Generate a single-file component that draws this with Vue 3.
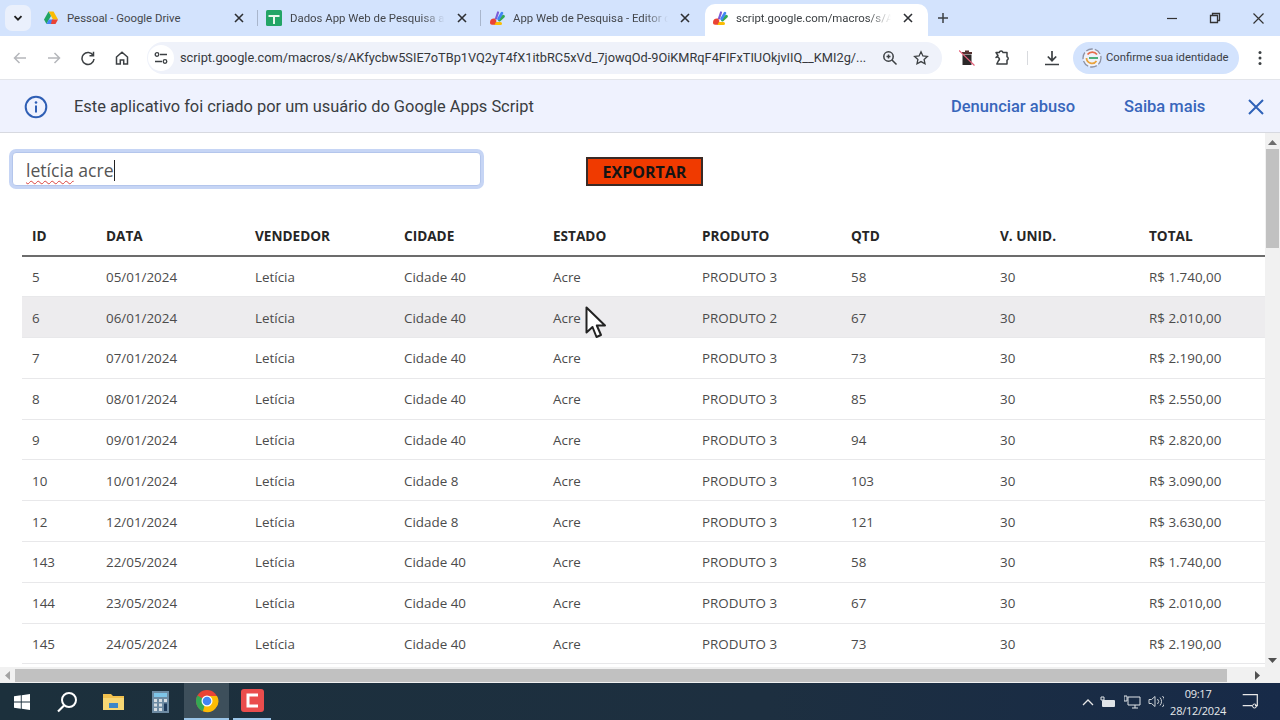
<script setup>
const tabs = [
  { icon: 'drive', title: 'Pessoal - Google Drive' },
  { icon: 'sheets', title: 'Dados App Web de Pesquisa ac' },
  { icon: 'script', title: 'App Web de Pesquisa - Editor d' },
  { icon: 'script', title: 'script.google.com/macros/s/AK', active: true }
]
const heads = ['ID', 'DATA', 'VENDEDOR', 'CIDADE', 'ESTADO', 'PRODUTO', 'QTD', 'V. UNID.', 'TOTAL']
const rows = [
  ['5', '05/01/2024', 'Cidade 40', 'PRODUTO 3', '58', 'R$ 1.740,00'],
  ['6', '06/01/2024', 'Cidade 40', 'PRODUTO 2', '67', 'R$ 2.010,00', true],
  ['7', '07/01/2024', 'Cidade 40', 'PRODUTO 3', '73', 'R$ 2.190,00'],
  ['8', '08/01/2024', 'Cidade 40', 'PRODUTO 3', '85', 'R$ 2.550,00'],
  ['9', '09/01/2024', 'Cidade 40', 'PRODUTO 3', '94', 'R$ 2.820,00'],
  ['10', '10/01/2024', 'Cidade 8', 'PRODUTO 3', '103', 'R$ 3.090,00'],
  ['12', '12/01/2024', 'Cidade 8', 'PRODUTO 3', '121', 'R$ 3.630,00'],
  ['143', '22/05/2024', 'Cidade 40', 'PRODUTO 3', '58', 'R$ 1.740,00'],
  ['144', '23/05/2024', 'Cidade 40', 'PRODUTO 3', '67', 'R$ 2.010,00'],
  ['145', '24/05/2024', 'Cidade 40', 'PRODUTO 3', '73', 'R$ 2.190,00']
]
</script>

<template>
  <div class="screen">
    <header class="tabstrip">
      <button class="collapse" aria-label="Lista de guias">
        <svg width="12" height="12" viewBox="0 0 12 12"><path d="M2.500 4.200 6 7.700l3.500-3.500" fill="none" stroke="#1f1f1f" stroke-width="1.800"/></svg>
      </button>
      <div class="tabs">
        <div v-for="(t, i) in tabs" :key="i" class="tab" :class="{ active: t.active, sep: i === 0 || i === 1 }">
          <svg v-if="t.icon === 'drive'" class="fav" viewBox="0 0 16 16">
            <path d="M5.500 1.500h5L15 9.500h-5z" fill="#fbbc04"/>
            <path d="M5.500 1.500 1 9.500l2.500 4.500L8 6z" fill="#1fa463"/>
            <path d="M5.800 9.500H10.500L9 14H3.500z" fill="#4285f4"/>
            <path d="M9 9.500h6L12.500 14H8z" fill="#ea4335"/>
          </svg>
          <svg v-else-if="t.icon === 'sheets'" class="fav" viewBox="0 0 16 16">
            <rect width="16" height="16" rx="1.500" fill="#23a566"/>
            <path d="M2.500 5h11v2H9v7H7V7H2.500z" fill="#e9f7ec"/>
          </svg>
          <svg v-else class="fav" viewBox="0 0 16 16">
            <path d="M10.500 10l3.800-3.600" stroke="#34a853" stroke-width="3" stroke-linecap="round" fill="none"/>
            <path d="M9.500 9l3.500-6" stroke="#4285f4" stroke-width="2.600" stroke-linecap="round" fill="none"/>
            <path d="M7 8.500l2-6" stroke="#7c5cd6" stroke-width="2.200" stroke-linecap="round" fill="none"/>
            <path d="M6 13.500h5.500" stroke="#fbbc04" stroke-width="3" stroke-linecap="round" fill="none"/>
            <path d="M1 12.500C1 9.500 3 8 6 8.500L7.500 11 5.500 14.800H3C1.800 14.800 1 13.800 1 12.500z" fill="#ea4335"/>
          </svg>
          <span class="tab-title">{{ t.title }}</span>
          <svg class="tab-x" width="10" height="10" viewBox="0 0 10 10"><path d="M1 1l8 8M9 1 1 9" stroke="#2d2f33" stroke-width="1.600"/></svg>
        </div>
        <svg class="plus" width="12" height="12" viewBox="0 0 12 12"><path d="M6 1v10M1 6h10" stroke="#3c4043" stroke-width="1.500"/></svg>
      </div>
      <div class="winctl">
        <svg width="12" height="12" viewBox="0 0 12 12"><path d="M1 6.500h10" stroke="#333" stroke-width="1.200"/></svg>
        <svg width="12" height="12" viewBox="0 0 12 12"><path d="M3.500 3V1.500h7v7H9M1.500 3.500h7v7h-7z" fill="none" stroke="#333" stroke-width="1.300"/></svg>
        <svg width="13" height="13" viewBox="0 0 13 13"><path d="M1.500 1.500l10 10M11.500 1.500l-10 10" stroke="#333" stroke-width="1.200"/></svg>
      </div>
    </header>

    <nav class="toolbar">
      <div class="navs">
        <svg width="16" height="16" viewBox="0 0 16 16"><path d="M14 8H3M7.500 3 2.500 8l5 5" fill="none" stroke="#b5b7bb" stroke-width="1.500"/></svg>
        <svg width="16" height="16" viewBox="0 0 16 16"><path d="M2 8h11M8.500 3l5 5-5 5" fill="none" stroke="#b5b7bb" stroke-width="1.500"/></svg>
        <svg width="16" height="16" viewBox="0 0 16 16"><path d="M13.200 5.500A6 6 0 1 0 14 9M13.500 1.800v4h-4" fill="none" stroke="#3c4043" stroke-width="1.500"/></svg>
        <svg width="16" height="16" viewBox="0 0 16 16"><path d="M2.500 7 8 2.200 13.500 7v7H9.700v-4H6.300v4H2.500z" fill="none" stroke="#3c4043" stroke-width="1.500"/></svg>
      </div>
      <div class="omnibox">
        <span class="site">
          <svg width="16" height="16" viewBox="0 0 16 16"><path d="M7 4.500H14M2 11.500h7" stroke="#3c4043" stroke-width="1.500" fill="none"/><circle cx="4" cy="4.500" r="1.800" fill="none" stroke="#3c4043" stroke-width="1.300"/><circle cx="12" cy="11.500" r="1.800" fill="none" stroke="#3c4043" stroke-width="1.300"/></svg>
        </span>
        <span class="url">script.google.com/macros/s/AKfycbw5SIE7oTBp1VQ2yT4fX1itbRC5xVd_7jowqOd-9OiKMRqF4FIFxTIUOkjvIIQ__KMI2g/...</span>
        <svg class="zoomi" width="16" height="16" viewBox="0 0 16 16"><circle cx="6.500" cy="6.500" r="4.700" fill="none" stroke="#3c4043" stroke-width="1.500"/><path d="M10 10l4.500 4.500M4.500 6.500h4M6.500 4.500v4" stroke="#3c4043" stroke-width="1.500"/></svg>
        <svg class="stari" width="16" height="16" viewBox="0 0 16 16"><path d="M8 1.800l1.900 4.100 4.500.5-3.300 3 .9 4.400L8 11.600l-4 2.200.9-4.400-3.300-3 4.500-.5z" fill="none" stroke="#3c4043" stroke-width="1.300"/></svg>
      </div>
      <div class="exts">
        <svg class="e-trash" width="16" height="18" viewBox="0 0 16 18"><path d="M3 3h10v2H3zM6 1.500h4V3H6z" fill="#55302f"/><path d="M3.500 5.500h9V16h-9z" fill="#2b2728"/><path d="M0 1.500l15.500 15" stroke="#e5607a" stroke-width="1.100"/></svg>
        <svg class="e-puzzle" width="18" height="18" viewBox="0 0 18 18"><path d="M3 3.500h3.200a2 2 0 0 1 3.800 0h4v4.200a1.800 1.800 0 0 1 0 3.400V15H3.800l1.700-3.300A2 2 0 0 0 3 8.500L5 6.500z" fill="none" stroke="#3c4043" stroke-width="1.500" stroke-linejoin="round"/></svg>
        <span class="divider"></span>
        <svg class="e-down" width="16" height="16" viewBox="0 0 16 16"><path d="M8 1v9.500M3.800 6.500 8 10.700l4.200-4.200M1 14.500h14" fill="none" stroke="#3c4043" stroke-width="1.700"/></svg>
        <div class="chip">
          <svg width="20" height="20" viewBox="0 0 20 20">
            <circle cx="10" cy="10" r="9" fill="#eef2fb" stroke="#8d93a6" stroke-width="1.300" stroke-dasharray="7 2"/>
            <path d="M15 6.500a6 6 0 0 0-9.500 0" fill="none" stroke="#e66c4a" stroke-width="1.800"/>
            <path d="M4.500 10a5.500 5.500 0 0 0 10 3" fill="none" stroke="#e8a33d" stroke-width="1.800"/>
            <path d="M7 10h9" stroke="#3aa76d" stroke-width="1.800"/>
          </svg>
          <span>Confirme sua identidade</span>
        </div>
        <svg class="e-menu" width="4" height="16" viewBox="0 0 4 16"><circle cx="2" cy="2.500" r="1.500" fill="#3c4043"/><circle cx="2" cy="8" r="1.500" fill="#3c4043"/><circle cx="2" cy="13.500" r="1.500" fill="#3c4043"/></svg>
      </div>
    </nav>

    <aside class="infobar">
      <svg class="info" width="24" height="24" viewBox="0 0 24 24"><circle cx="12" cy="12" r="10.300" fill="none" stroke="#2f5fb5" stroke-width="2"/><path d="M12 10.500v7" stroke="#2f5fb5" stroke-width="2"/><circle cx="12" cy="7.500" r="1.300" fill="#2f5fb5"/></svg>
      <span class="info-text">Este aplicativo foi criado por um usuário do Google Apps Script</span>
      <a class="lnk l1">Denunciar abuso</a>
      <a class="lnk l2">Saiba mais</a>
      <svg class="info-x" width="18" height="18" viewBox="0 0 18 18"><path d="M2 2l14 14M16 2 2 16" stroke="#2f62b8" stroke-width="2"/></svg>
    </aside>

    <main class="page">
      <div class="view">
        <div class="content">
          <div class="controls">
            <div class="search">
              <span class="typed"><span class="misspelt">letícia</span> acre</span><span class="caret"></span>
            </div>
            <button class="export">EXPORTAR</button>
          </div>
          <table class="grid">
            <colgroup>
              <col class="c-id" />
              <col v-for="n in 8" :key="n" class="c-n" />
            </colgroup>
            <thead>
              <tr><th v-for="h in heads" :key="h">{{ h }}</th></tr>
            </thead>
            <tbody>
              <tr v-for="r in rows" :key="r[0]" :class="{ hover: r[6] }">
                <td>{{ r[0] }}</td>
                <td>{{ r[1] }}</td>
                <td>Letícia</td>
                <td>{{ r[2] }}</td>
                <td>Acre</td>
                <td>{{ r[3] }}</td>
                <td>{{ r[4] }}</td>
                <td>30</td>
                <td>{{ r[5] }}</td>
              </tr>
            </tbody>
          </table>
          <svg class="cursor" width="22" height="33" viewBox="0 0 22 33"><path d="M1.500 1.500v25l6-5.500 4 10 4.500-2-4.200-9.500H20z" fill="#fff" stroke="#222" stroke-width="2" stroke-linejoin="round"/></svg>
        </div>
        <div class="vbar">
          <svg width="9" height="5" viewBox="0 0 9 5"><path d="M4.500 0 9 5H0z" fill="#6d6d6d"/></svg>
          <div class="vthumb"></div>
          <svg class="vdown" width="9" height="5" viewBox="0 0 9 5"><path d="M0 0h9L4.500 5z" fill="#505050"/></svg>
        </div>
      </div>
      <div class="hbar">
        <svg width="5" height="9" viewBox="0 0 5 9"><path d="M5 0v9L0 4.500z" fill="#a3a3a3"/></svg>
        <div class="hthumb"></div>
        <svg width="5" height="9" viewBox="0 0 5 9"><path d="M0 0v9l5-4.500z" fill="#505050"/></svg>
      </div>
    </main>

    <footer class="taskbar">
      <div class="task-left">
        <span class="tb t1"><svg width="16" height="16" viewBox="0 0 16 16"><path d="M0 2.300 6.800 1.300v6.300H0zM7.700 1.200 16 0v7.600H7.700zM0 8.400h6.800v6.300L0 13.700zM7.700 8.400H16V16l-8.300-1.200z" fill="#fff"/></svg></span>
        <span class="tb"><svg width="22" height="22" viewBox="0 0 22 22"><circle cx="13" cy="9" r="7" fill="none" stroke="#fff" stroke-width="2"/><path d="M8 14.500 2 20.500" stroke="#fff" stroke-width="2.200"/></svg></span>
        <span class="tb t3"><svg width="21" height="18" viewBox="0 0 21 18"><path d="M0 1h8l2 2h11v14H0z" fill="#f2c14e"/><path d="M0 5h21v12H0z" fill="#f7d774"/><rect x="6" y="10" width="9" height="5" fill="#3d87c9"/></svg></span>
        <span class="tb t3"><svg width="17" height="22" viewBox="0 0 17 22"><rect width="17" height="22" fill="#6d8ba3"/><rect x="2" y="2" width="13" height="4" fill="#7ec5e8"/><path d="M2 8h3v3H2zM7 8h3v3H7zM12 8h3v3h-3zM2 12.500h3v3H2zM7 12.500h3v3H7zM2 17h3v3H2zM7 17h3v3H7z" fill="#d5dde3"/><rect x="12" y="12.500" width="3" height="7.500" fill="#1f3b5c"/></svg></span>
        <span class="tb on"><svg width="24" height="24" viewBox="0 0 24 24">
          <circle cx="12" cy="12" r="11" fill="#ea4335"/>
          <path d="M12 12 2.500 6.500A11 11 0 0 0 8 22.300z" fill="#34a853"/>
          <path d="M12 7h10a11 11 0 0 1-14 15.300z" fill="#fbbc04"/>
          <circle cx="12" cy="12" r="5.500" fill="#fff"/><circle cx="12" cy="12" r="4.300" fill="#4285f4"/>
        </svg></span>
        <span class="tb und"><svg width="23" height="23" viewBox="0 0 23 23"><rect width="23" height="23" rx="3" fill="#ea4d4d"/><path d="M17 6H7v11h10" fill="none" stroke="#fff" stroke-width="3"/></svg></span>
      </div>
      <div class="tray">
        <svg class="chev" width="12" height="8" viewBox="0 0 12 8"><path d="M1 7l5-5 5 5" fill="none" stroke="#e6e6e6" stroke-width="1.300"/></svg>
        <svg class="batt" width="16" height="12" viewBox="0 0 16 12"><rect x="2" y="4" width="13" height="7" rx="1" fill="#e0e4e8"/><path d="M1 1h3v3H1z" fill="none" stroke="#e0e4e8"/></svg>
        <svg class="net" width="17" height="14" viewBox="0 0 17 14"><path d="M4 2h12v8H4zM8 13h6M11 10v3M0 1h3v5H0z" fill="none" stroke="#e0e4e8"/></svg>
        <svg class="vol" width="16" height="13" viewBox="0 0 16 13"><path d="M1 4.500h2.500L7 1.500v10l-3.500-3H1zM9.500 4a3.500 3.500 0 0 1 0 5M12 2.500a6 6 0 0 1 0 8M14.500 1a8 8 0 0 1 0 11" fill="none" stroke="#cfd4d8"/></svg>
        <div class="clock"><span>09:17</span><span>28/12/2024</span></div>
        <svg class="notif" width="16" height="15" viewBox="0 0 16 15"><path d="M.7.700h14.600v11H13M10 11.700H.7z" fill="none" stroke="#e8e8e8" stroke-width="1.200"/><circle cx="12.500" cy="12" r="2" fill="none" stroke="#e8e8e8"/></svg>
      </div>
    </footer>
  </div>
</template>

<style>
html, body { margin: 0; background: #fff; overflow: hidden; }
</style>

<style scoped>
.screen {
  width: 1280px; height: 720px; display: flex; flex-direction: column;
  overflow: hidden; font-family: "Open Sans", sans-serif; background: #fff;
}

/* tab strip */
.tabstrip { height: 36px; background: #d3e3fd; display: flex; align-items: flex-end; flex: none; }
.collapse {
  width: 26px; height: 26px; margin: 0 5px 5px 5px; padding: 0; border: 0; border-radius: 7px;
  background: #eaf0fc; display: flex; align-items: center; justify-content: center;
}
.tabs { display: flex; align-items: center; flex: 1; height: 32px; }
.tab {
  width: 223px; min-width: 223px; flex: none; height: 32px; box-sizing: border-box; padding: 0 15px 4px 7px; display: flex;
  align-items: center; gap: 8px; position: relative; color: #44474c; font: 11.400px "Roboto", sans-serif;
}
.tab.sep::after {
  content: ""; position: absolute; right: 1px; top: 6px; height: 16px; width: 1px; background: #a9b6cc;
}
.tab.active { background: #fff; border-radius: 10px 10px 0 0; color: #3c4043; }
.fav { width: 16px; height: 16px; flex: none; }
.tab-title {
  flex: 1; min-width: 0; white-space: nowrap;
  -webkit-mask-image: linear-gradient(90deg, #000 85%, transparent 100%);
  mask-image: linear-gradient(90deg, #000 85%, transparent 100%);
}
.tab:first-child .tab-title { -webkit-mask-image: none; mask-image: none; }
.tab-x { flex: none; margin-left: 4px; }
.plus { margin: 0 0 5px 9px; }
.winctl { display: flex; align-items: center; gap: 31px; height: 36px; padding-right: 15px; }

/* toolbar */
.toolbar {
  height: 44px; flex: none; background: #fff; display: flex; align-items: center;
  border-bottom: 1px solid #e3e5ea; box-sizing: border-box;
}
.navs { display: flex; align-items: center; gap: 18px; padding-left: 12px; width: 147px; box-sizing: border-box; flex: none; }
.omnibox {
  width: 795px; height: 32px; background: #eff2fa; border-radius: 16px; display: flex; align-items: center;
  box-sizing: border-box; flex: none;
}
.site {
  width: 26px; height: 26px; border-radius: 50%; background: #fff; margin-left: 1px; display: flex;
  align-items: center; justify-content: center; flex: none;
}
.url { margin-left: 6px; width: 689px; flex: none; white-space: nowrap; overflow: visible; font: 12.770px "Roboto", sans-serif; color: #35383c; }
.zoomi { margin-left: 13px; flex: none; }
.stari { margin-left: 15px; flex: none; }
.exts { display: flex; align-items: center; }
.e-trash { margin-left: 17px; }
.e-puzzle { margin-left: 18px; }
.divider { width: 1px; height: 14px; background: #d8dade; margin-left: 16px; }
.e-down { margin-left: 16px; }
.chip {
  margin-left: 13px; width: 166px; height: 32px; border-radius: 16px; background: #d3e3fd; display: flex;
  align-items: center; gap: 4px; padding-left: 9px; box-sizing: border-box; font: 11.300px "Roboto", sans-serif; color: #3b4046;
  white-space: nowrap;
}
.e-menu { margin-left: 19px; }

/* info bar */
.infobar {
  height: 53px; flex: none; box-sizing: border-box; background: #eff2fe; border-bottom: 1px solid #d7d9e0;
  display: flex; align-items: center; font-family: "Roboto", sans-serif; padding-top: 1px;
}
.info { margin-left: 24px; flex: none; }
.info-text { margin-left: 26px; width: 877px; flex: none; font-size: 16.420px; color: #3a3d42; white-space: nowrap; }
.lnk { font-size: 16.500px; font-weight: 500; color: #3866bb; white-space: nowrap; }
.l1 { width: 173px; flex: none; }
.l2 { width: 123px; flex: none; }
.info-x { flex: none; }

/* page */
.page { flex: 1; display: flex; flex-direction: column; min-height: 0; }
.view { flex: 1; display: flex; min-height: 0; }
.content { flex: 1; min-width: 0; overflow: hidden; position: relative; padding: 0 0 0 22px; }
.controls { display: flex; align-items: flex-start; height: 92px; margin-left: -13px; }
.search {
  width: 469px; height: 34px; box-sizing: border-box; margin: 19px 0 0 3px; border: 1px solid #b4c6ec;
  border-radius: 4px; box-shadow: 0 0 0 3px #c6d5f5; background: #fff; display: flex; align-items: center;
  padding: 2px 0 0 13px; font-size: 17.600px; color: #555;
}
.typed { white-space: pre; }
.misspelt { text-decoration: underline wavy #d9433f 1px; text-underline-offset: 3px; }
.caret { width: 1px; height: 21px; background: #222; }
.export {
  width: 117px; height: 29px; margin: 24px 0 0 105px; padding: 1px 0 0; box-sizing: border-box;
  border: 2px solid #3a2a26; background: #f03a00; color: #141414; font: 700 16px "Open Sans", sans-serif;
}
.grid { width: 1265px; table-layout: fixed; border-collapse: collapse; font-size: 13.400px; color: #4b4b4b; }
.c-id { width: 74px; }
.c-n { width: 149px; }
th {
  height: 21px; padding: 0 10px 9px; text-align: left; font-weight: 700; color: #262626;
  border-bottom: 2px solid #6c6c6c; font-size: 13.600px; white-space: nowrap;
}
td { height: 40.800px; padding: 1px 10px 0; border-bottom: 1px solid #e8e8ea; box-sizing: border-box; white-space: nowrap; }
.hover td { background: #edecee; }
.cursor { position: absolute; left: 585px; top: 173px; }

.vbar { width: 15px; flex: none; background: #f1f1f1; display: flex; flex-direction: column; align-items: center; padding-top: 7px; box-sizing: border-box; }
.vthumb { width: 13px; height: 99px; background: #c1c1c1; margin-top: 4px; }
.vdown { margin-top: auto; margin-bottom: 4px; }
.hbar { height: 16px; flex: none; background: #f1f1f1; display: flex; align-items: center; padding: 0 5px; box-sizing: border-box; }
.hthumb { width: 1212px; height: 13px; background: #c1c1c1; margin: 0 28px 0 5px; }

/* taskbar */
.taskbar {
  height: 37px; flex: none; background: linear-gradient(90deg, #1c303c, #1d2f40 60%, #172a48);
  display: flex; align-items: center; justify-content: space-between; box-sizing: border-box;
}
.task-left { display: flex; height: 100%; }
.tb { width: 46px; height: 100%; display: flex; align-items: center; justify-content: center; box-sizing: border-box; flex: none; }
.t1 { width: 44px; }
.t3 { width: 47px; }
.tb.on { width: 45px; background: #3d4f5b; border-bottom: 2px solid #9bc5e8; }
.tb.und { width: 38px; margin-left: 4px; border-bottom: 2px solid #9bc5e8; }
.tray { display: flex; align-items: center; padding-right: 22px; }
.chev { margin-right: 6px; }
.batt { margin-right: 8px; }
.net { margin-right: 7px; }
.vol { margin-right: 6px; }
.clock {
  display: flex; flex-direction: column; align-items: center; font: 11px/17px "Open Sans", sans-serif;
  letter-spacing: -0.250px; color: #e6e9ec; margin-right: 16px;
}
</style>
